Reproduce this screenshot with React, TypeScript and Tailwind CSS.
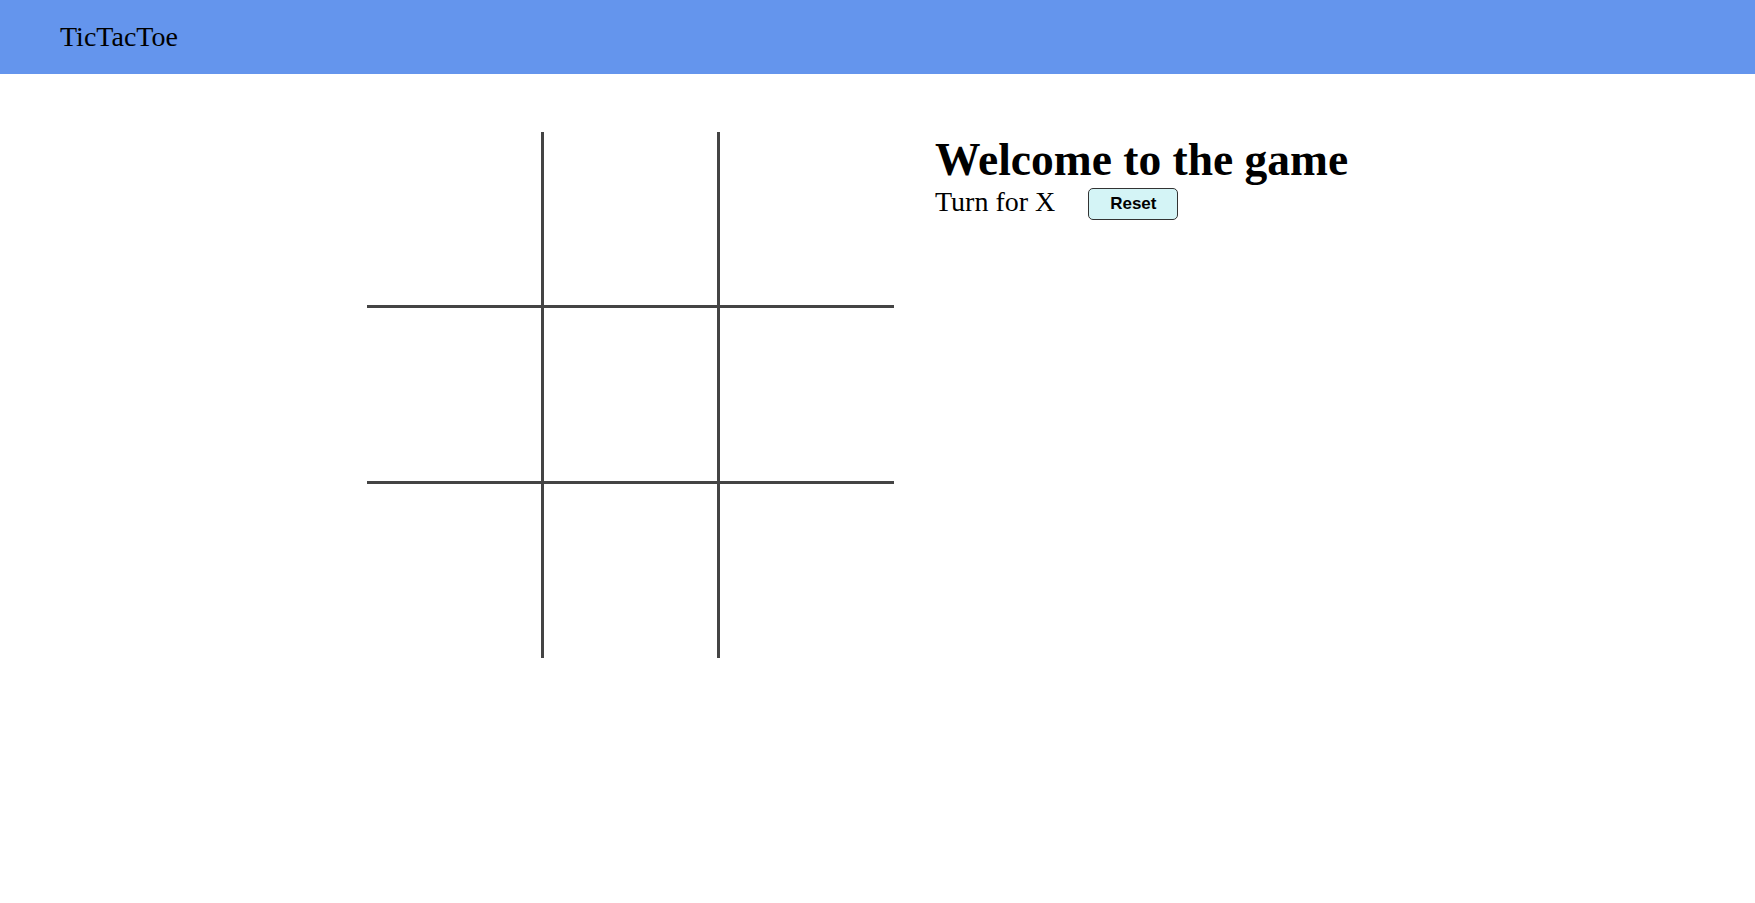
import React, { useState } from "react";

const serif = { fontFamily: '"Liberation Serif", "Times New Roman", serif' };

const App = () => {
  const [cells, setCells] = useState<(string | null)[]>(Array(9).fill(null));
  const [turn, setTurn] = useState("X");

  const play = (i: number) => {
    if (cells[i]) return;
    const next = [...cells];
    next[i] = turn;
    setCells(next);
    setTurn(turn === "X" ? "O" : "X");
  };

  const reset = () => {
    setCells(Array(9).fill(null));
    setTurn("X");
  };

  return (
    <div className="min-h-screen bg-white text-black" style={serif}>
      <nav className="flex h-[74px] items-center bg-[#6495ed] px-[60px]">
        <span className="text-[28px] leading-none">TicTacToe</span>
      </nav>
      <main className="flex items-start pl-[367px] pt-[58px]">
        <div className="grid grid-cols-[174px_173px_174px] grid-rows-[173px_173px_174px] gap-[3px] bg-[#444444]">
          {cells.map((c, i) => (
            <div
              key={i}
              onClick={() => play(i)}
              className="flex cursor-pointer items-center justify-center bg-white text-[96px] leading-none"
            >
              {c}
            </div>
          ))}
        </div>
        <div className="ml-[41px] pt-[5px]">
          <h1 className="text-[45.5px] font-bold leading-none">Welcome to the game</h1>
          <div className="mt-[5px] flex items-start">
            <span className="text-[28px] leading-none">Turn for {turn}</span>
            <button
              onClick={reset}
              className="ml-[33px] h-[32px] w-[90px] rounded-[5px] border-[1.5px] border-[#333333] bg-[#d4f4f6] text-[17px] font-bold"
              style={{ fontFamily: '"Liberation Sans", Arial, sans-serif' }}
            >
              Reset
            </button>
          </div>
        </div>
      </main>
    </div>
  );
};

export default App;
